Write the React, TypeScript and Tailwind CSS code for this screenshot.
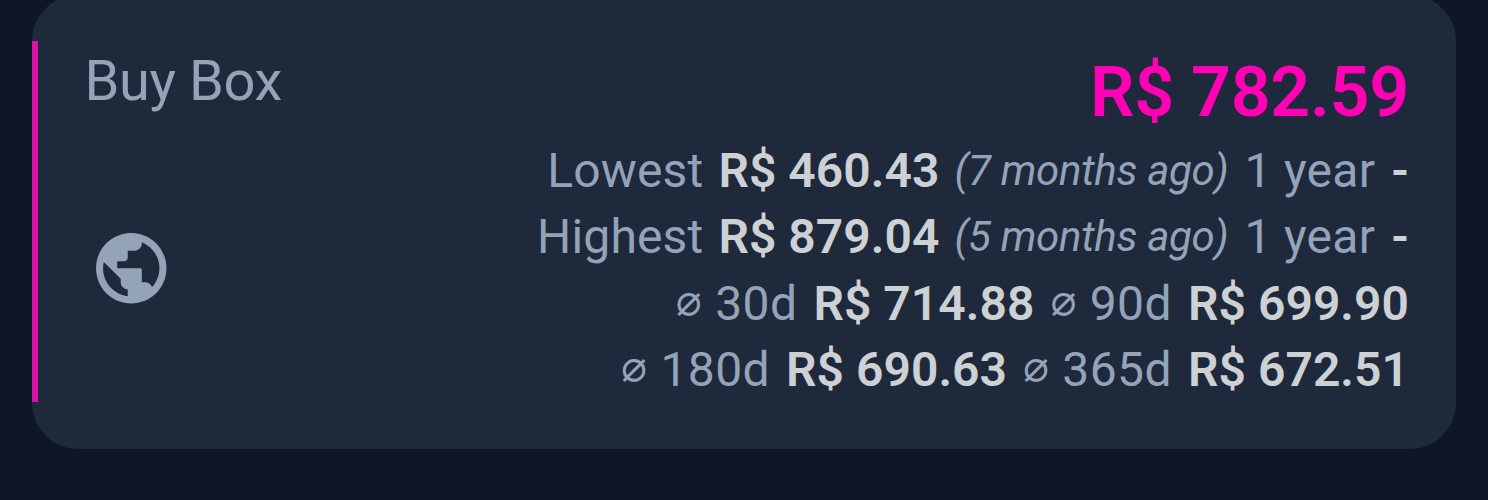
interface Extreme {
  label: string;
  price: string;
  when: string;
}

interface Average {
  period: string;
  price: string;
}

const extremes: Extreme[] = [
  { label: "Lowest", price: "R$ 460.43", when: "(7 months ago)" },
  { label: "Highest", price: "R$ 879.04", when: "(5 months ago)" },
];

const averages: Average[][] = [
  [
    { period: "30d", price: "R$ 714.88" },
    { period: "90d", price: "R$ 699.90" },
  ],
  [
    { period: "180d", price: "R$ 690.63" },
    { period: "365d", price: "R$ 672.51" },
  ],
];

function GlobeIcon({ className }: { className?: string }) {
  return (
    <svg viewBox="0 0 24 24" fill="currentColor" className={className}>
      <path d="M12 2C6.48 2 2 6.48 2 12s4.48 10 10 10 10-4.48 10-10S17.52 2 12 2zm-1 17.93c-3.95-.49-7-3.85-7-7.93 0-.62.08-1.21.21-1.79L9 15v1c0 1.1.9 2 2 2v1.93zm6.9-2.54c-.26-.81-1-1.39-1.9-1.39h-1v-3.6c0-.22-.18-.4-.4-.4H8v-2h2c.55 0 1-.45 1-1V7h2c1.1 0 2-.9 2-2v-.41c2.93 1.19 5 4.06 5 7.41 0 2.08-.8 3.97-2.1 5.39z" />
    </svg>
  );
}

function Price({ children }: { children: string }) {
  return (
    <span className="font-semibold tracking-[0.05px] text-[#cdd1d4]">
      {children}
    </span>
  );
}

export default function App() {
  return (
    <div className="h-[500px] overflow-hidden bg-[#0e1629] px-8 font-['Roboto',sans-serif] text-[#94a3b8]">
      <div className="-mt-[5px] h-[453.5px] rounded-[46px] bg-[#1e293b] py-[46px]">
        <div className="flex h-[361px] justify-between border-l-6 border-[#db12a6] pr-[47px] pl-[46.5px]">
          <div className="flex flex-col items-start">
            <h2 className="mt-[7px] text-[56px] leading-[66px] tracking-[-0.4px]">
              Buy Box
            </h2>
            <GlobeIcon className="mt-[112px] ml-[4.5px] size-[84.5px]" />
          </div>

          <div className="flex flex-col items-end text-[48px] leading-[66.5px] whitespace-nowrap">
            <div className="mt-[11px] mb-[5.5px] text-[70px] leading-[80px] font-semibold tracking-[-0.3px] text-[#ff00b4]">
              R$ 782.59
            </div>

            {extremes.map((row) => (
              <div key={row.label} className="flex gap-4 tracking-[0.3px]">
                <span className="-mr-px tracking-[0.15px]">{row.label}</span>
                <Price>{row.price}</Price>
                <span className="-ml-px text-[42px] tracking-[-0.3px] italic">
                  {row.when}
                </span>
                <span>1 year</span>
                <Price>-</Price>
              </div>
            ))}

            {averages.map((row, idx) => (
              <div key={idx} className="flex gap-4 tracking-[0.4px]">
                {row.map((avg) => (
                  <div key={avg.period} className="flex gap-4">
                    <span className="-mt-[4px] -mr-[3px] font-['DejaVu_Sans',sans-serif] text-[43px]">
                      ⌀
                    </span>
                    <span>{avg.period}</span>
                    <Price>{avg.price}</Price>
                  </div>
                ))}
              </div>
            ))}
          </div>
        </div>
      </div>
    </div>
  );
}
